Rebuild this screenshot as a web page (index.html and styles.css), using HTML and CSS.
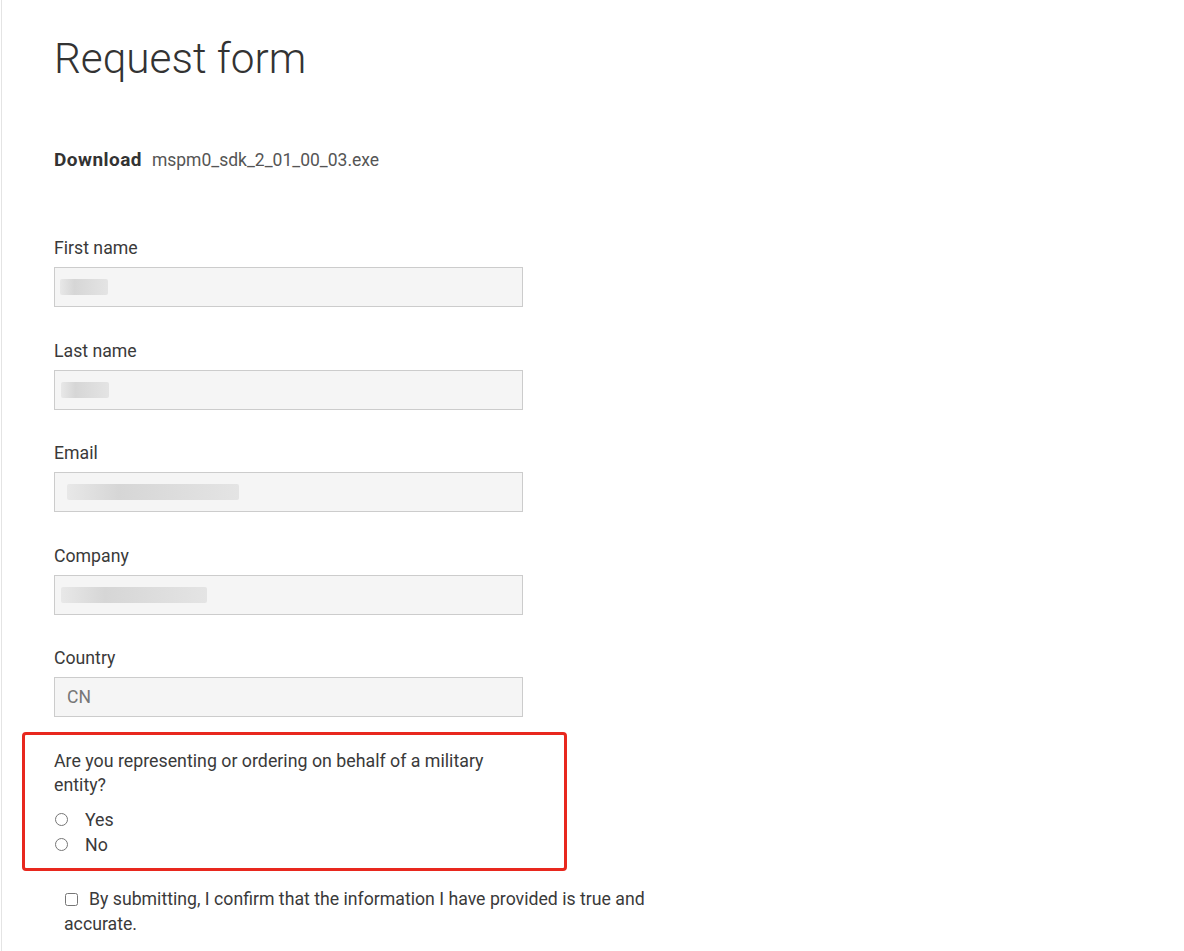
FILE: index.html
```html
<!DOCTYPE html>
<html lang="en">
<head>
<meta charset="utf-8">
<title>Request form</title>
<link rel="stylesheet" href="styles.css">
</head>
<body>
<div class="page">
  <h1 class="title">Request form</h1>
  <p class="download"><span class="download-label">Download</span><span class="download-file">mspm0_sdk_2_01_00_03.exe</span></p>
  <form class="form">
    <div class="group">
      <label class="label">First name</label>
      <div class="field"><span class="redact redact-first"></span></div>
    </div>
    <div class="group">
      <label class="label">Last name</label>
      <div class="field"><span class="redact redact-last"></span></div>
    </div>
    <div class="group">
      <label class="label">Email</label>
      <div class="field"><span class="redact redact-email"></span></div>
    </div>
    <div class="group">
      <label class="label">Company</label>
      <div class="field"><span class="redact redact-company"></span></div>
    </div>
    <div class="group group-last">
      <label class="label">Country</label>
      <div class="field field-text">CN</div>
    </div>
    <div class="highlight">
      <p class="question">Are you representing or ordering on behalf of a military entity?</p>
      <label class="radio-row"><input type="radio" name="mil" class="radio"><span>Yes</span></label>
      <label class="radio-row"><input type="radio" name="mil" class="radio"><span>No</span></label>
    </div>
    <label class="confirm"><input type="checkbox" class="check">By submitting, I confirm that the information I have provided is true and accurate.</label>
  </form>
</div>
</body>
</html>
```
FILE: styles.css
```css
html, body {
  margin: 0;
  padding: 0;
  background: #fff;
}
body {
  font-family: Roboto, "Liberation Sans", Arial, sans-serif;
  color: #3a3a3a;
}
.page {
  margin-left: 1px;
  border-left: 1px solid #e4e4e4;
  min-height: 951px;
  padding-left: 52px;
  box-sizing: border-box;
  padding-top: 33px;
}
.title {
  margin: 0;
  font-size: 42.3px;
  font-weight: 300;
  line-height: 52px;
  color: #333;
}
.download {
  margin: 63px 0 0;
  line-height: 24px;
  display: flex;
  align-items: baseline;
  gap: 10px;
}
.download-label {
  font-size: 19px;
  font-weight: 700;
  letter-spacing: 0.45px;
  color: #333;
}
.download-file {
  font-size: 17.5px;
  color: #555;
}
.form {
  margin-top: 64px;
}
.group {
  margin-bottom: 31.5px;
}
.group-last {
  margin-bottom: 15px;
}
.label {
  display: block;
  font-size: 17.7px;
  line-height: 24px;
  margin-bottom: 7px;
  color: #3a3a3a;
}
.field {
  width: 469px;
  height: 40px;
  box-sizing: border-box;
  background: #f5f5f5;
  border: 1px solid #ccc;
  display: flex;
  align-items: center;
  padding-left: 12px;
  font-size: 17.5px;
  color: #777;
}
.redact {
  display: block;
  height: 16px;
  background: linear-gradient(90deg, #e8e8e8, #d6d6d6 30%, #dcdcdc 60%, #e4e4e4);
  border-radius: 2px;
}
.redact-first { width: 48px; margin-left: -7px; }
.redact-last { width: 48px; margin-left: -6px; }
.redact-email { width: 172px; margin-left: 0; }
.redact-company { width: 146px; margin-left: -6px; }
.highlight {
  width: 545px;
  box-sizing: border-box;
  margin-left: -32px;
  border: 3px solid #e8281e;
  border-radius: 4px;
  padding: 14px 0 11px 29px;
}
.question {
  margin: 0 0 10px;
  width: 469px;
  font-size: 17.8px;
  line-height: 24px;
}
.radio-row {
  display: flex;
  align-items: center;
  font-size: 17.8px;
  line-height: 25px;
  height: 25px;
}
.radio {
  margin: 0 17px 0 1px;
  width: 13px;
  height: 13px;
}
.confirm {
  display: block;
  margin: 16px 0 0 10px;
  width: 600px;
  font-size: 17.7px;
  line-height: 25px;
}
.check {
  margin: 0 11px 0 1px;
  width: 13px;
  height: 13px;
  vertical-align: -1px;
}
```
